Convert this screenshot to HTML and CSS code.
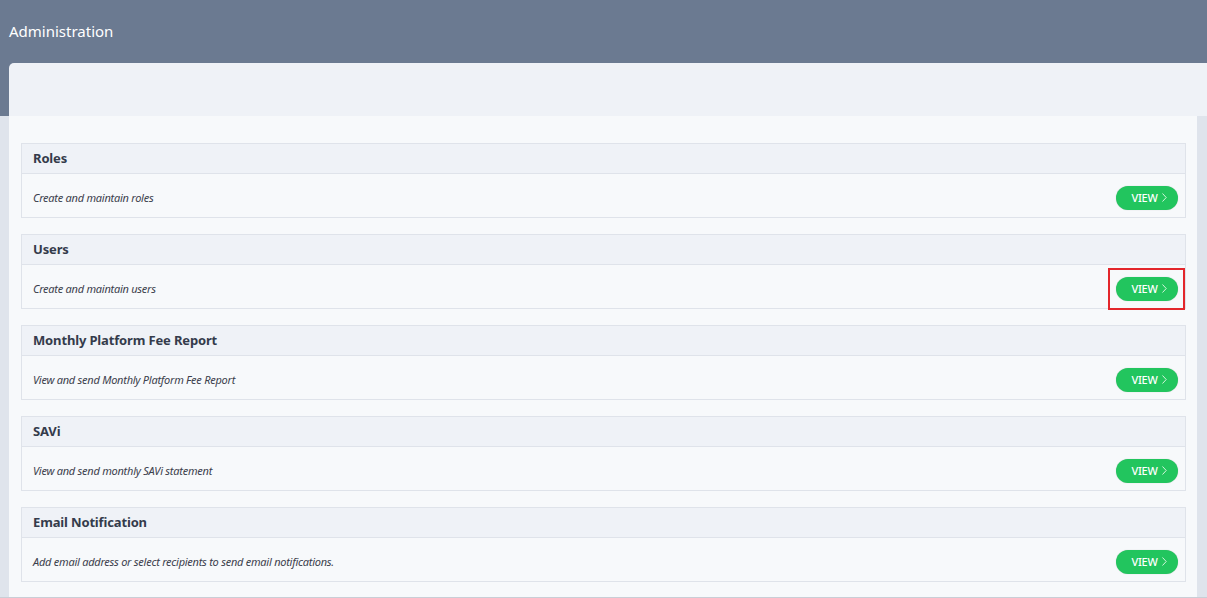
FILE: index.html
```html
<!DOCTYPE html>
<html>
<head>
<meta charset="utf-8">
<link rel="stylesheet" href="styles.css">
</head>
<body>
<div class="top">
  <h1 class="page-title">Administration</h1>
  <div class="card-head"></div>
</div>
<div class="main">
  <div class="card-body">
    <div class="panel">
      <div class="panel-head">Roles</div>
      <div class="panel-row"><span class="desc">Create and maintain roles</span><button class="btn">VIEW<svg class="chev" viewBox="0 0 5 9"><path d="M0.5 0.5 L4.2 4.5 L0.5 8.5" /></svg></button></div>
    </div>
    <div class="panel">
      <div class="panel-head">Users</div>
      <div class="panel-row"><span class="desc">Create and maintain users</span><span class="hl"><button class="btn">VIEW<svg class="chev" viewBox="0 0 5 9"><path d="M0.5 0.5 L4.2 4.5 L0.5 8.5" /></svg></button></span></div>
    </div>
    <div class="panel">
      <div class="panel-head">Monthly Platform Fee Report</div>
      <div class="panel-row"><span class="desc">View and send Monthly Platform Fee Report</span><button class="btn">VIEW<svg class="chev" viewBox="0 0 5 9"><path d="M0.5 0.5 L4.2 4.5 L0.5 8.5" /></svg></button></div>
    </div>
    <div class="panel">
      <div class="panel-head">SAVi</div>
      <div class="panel-row"><span class="desc">View and send monthly SAVi statement</span><button class="btn">VIEW<svg class="chev" viewBox="0 0 5 9"><path d="M0.5 0.5 L4.2 4.5 L0.5 8.5" /></svg></button></div>
    </div>
    <div class="panel">
      <div class="panel-head">Email Notification</div>
      <div class="panel-row"><span class="desc">Add email address or select recipients to send email notifications.</span><button class="btn">VIEW<svg class="chev" viewBox="0 0 5 9"><path d="M0.5 0.5 L4.2 4.5 L0.5 8.5" /></svg></button></div>
    </div>
  </div>
</div>
</body>
</html>
```
FILE: styles.css
```css
* { box-sizing: border-box; }
html, body { margin: 0; padding: 0; }
body {
  font-family: "Noto Sans", "Open Sans", sans-serif;
  background: #dfe4ec;
  width: 1207px;
  height: 598px;
  overflow: hidden;
}
.top {
  background: #6b7a91;
  padding-left: 9px;
}
.page-title {
  margin: 0;
  height: 63px;
  line-height: 62px;
  font-size: 15px;
  font-weight: 400;
  color: #ffffff;
}
.card-head {
  height: 53px;
  background: #eff2f7;
  border-top-left-radius: 5px;
}
.main {
  padding: 0 10px 0 9px;
  height: 482px;
  border-bottom: 1px solid #c9ced6;
}
.card-body {
  background: #f7f9fb;
  height: 481px;
  padding: 27px 11px 0 12px;
  display: flex;
  flex-direction: column;
  gap: 16px;
}
.panel {
  border: 1px solid #dfe3ea;
  background: #f7f9fb;
}
.panel-head {
  height: 30px;
  background: #eff2f7;
  border-bottom: 1px solid #dfe3ea;
  padding-left: 11px;
  font-size: 13px;
  font-weight: 700;
  line-height: 28px;
  letter-spacing: -0.15px;
  color: #343b4b;
}
.panel-row {
  height: 43px;
  display: flex;
  align-items: center;
  justify-content: space-between;
  padding: 4px 7px 0 11px;
}
.desc {
  font-size: 11px;
  font-style: italic;
  letter-spacing: -0.25px;
  color: #3b404c;
}
.btn {
  width: 62px;
  height: 24px;
  border: none;
  border-radius: 12px;
  background: #22c55e;
  color: #ffffff;
  font-family: "Noto Sans", "Open Sans", sans-serif;
  font-size: 11px;
  font-weight: 500;
  letter-spacing: -0.3px;
  display: flex;
  align-items: center;
  justify-content: center;
  gap: 5px;
  padding: 0 0 0 5px;
  box-shadow: 0 0 1px rgba(0,0,0,0.25);
}
.chev {
  width: 5px;
  height: 9px;
  fill: none;
  stroke: #e8fbe9;
  stroke-width: 0.9;
}
.hl {
  position: relative;
  display: inline-flex;
}
.hl::after {
  content: "";
  position: absolute;
  left: -8px;
  top: -9px;
  right: -7px;
  bottom: -9px;
  border: 2px solid #e3262b;
}
```
